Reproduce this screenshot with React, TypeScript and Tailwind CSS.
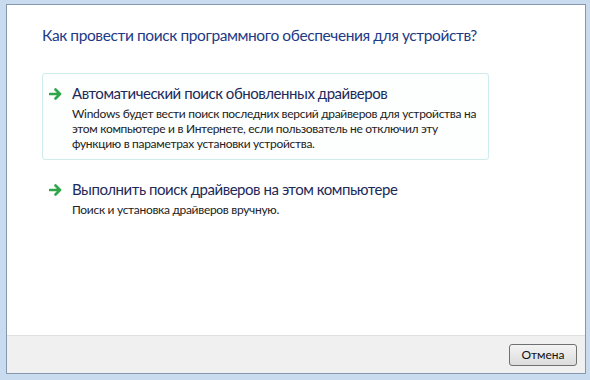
function Arrow() {
  return (
    <svg width="14" height="12" viewBox="0 0 14 12" className="mt-[7px] shrink-0">
      <path d="M1 6h9M6.5 1.5 11 6l-4.5 4.5" fill="none" stroke="#2fa64a" strokeWidth="2.6" strokeLinecap="round" strokeLinejoin="round" />
    </svg>
  )
}

type OptionProps = {
  title: string
  lines: string[]
  highlighted?: boolean
}

function Option({ title, lines, highlighted }: OptionProps) {
  return (
    <div
      className={
        'flex w-[447px] gap-[9px] rounded-[3px] border pl-[6px] pt-[7px] pb-[8px] ' +
        (highlighted ? 'border-[#cdeceb] bg-[#fdfefe]' : 'border-transparent')
      }
    >
      <Arrow />
      <div className="whitespace-nowrap">
        <div className="text-[15px] leading-[25px] tracking-[-0.45px] text-[#1c2a5a]">{title}</div>
        <div className="text-[12px] leading-[15px] tracking-[-0.3px] text-[#222]">
          {lines.map((l) => (
            <div key={l}>{l}</div>
          ))}
        </div>
      </div>
    </div>
  )
}

export default function App() {
  return (
    <div
      className="flex h-[380px] w-[590px] flex-col bg-[#c9dbee] pl-[6px] pr-[4px] pt-[4px] pb-[6px]"
      style={{ fontFamily: 'Lato, "Noto Sans", sans-serif' }}
    >
      <div className="flex flex-1 flex-col border border-[#8497ad] bg-white">
        <div className="flex-1 pl-[35px]">
          <h1 className="mt-[19px] whitespace-nowrap text-[15.5px] leading-[22px] tracking-[-0.4px] text-[#1e3a86]">
            Как провести поиск программного обеспечения для устройств?
          </h1>
          <div className="mt-[27px] flex flex-col gap-[9px]">
            <Option
              highlighted
              title="Автоматический поиск обновленных драйверов"
              lines={[
                'Windows будет вести поиск последних версий драйверов для устройства на',
                'этом компьютере и в Интернете, если пользователь не отключил эту',
                'функцию в параметрах установки устройства.',
              ]}
            />
            <Option
              title="Выполнить поиск драйверов на этом компьютере"
              lines={['Поиск и установка драйверов вручную.']}
            />
          </div>
        </div>
        <div className="flex h-[38px] items-center justify-end border-t border-[#dfdfdf] bg-[#f0f0f0] pr-[8px]">
          <button className="h-[22px] w-[68px] rounded-[3px] border border-[#707070] bg-gradient-to-b from-[#f4f4f4] to-[#dcdcdc] text-[12px] text-[#111]">
            Отмена
          </button>
        </div>
      </div>
    </div>
  )
}
